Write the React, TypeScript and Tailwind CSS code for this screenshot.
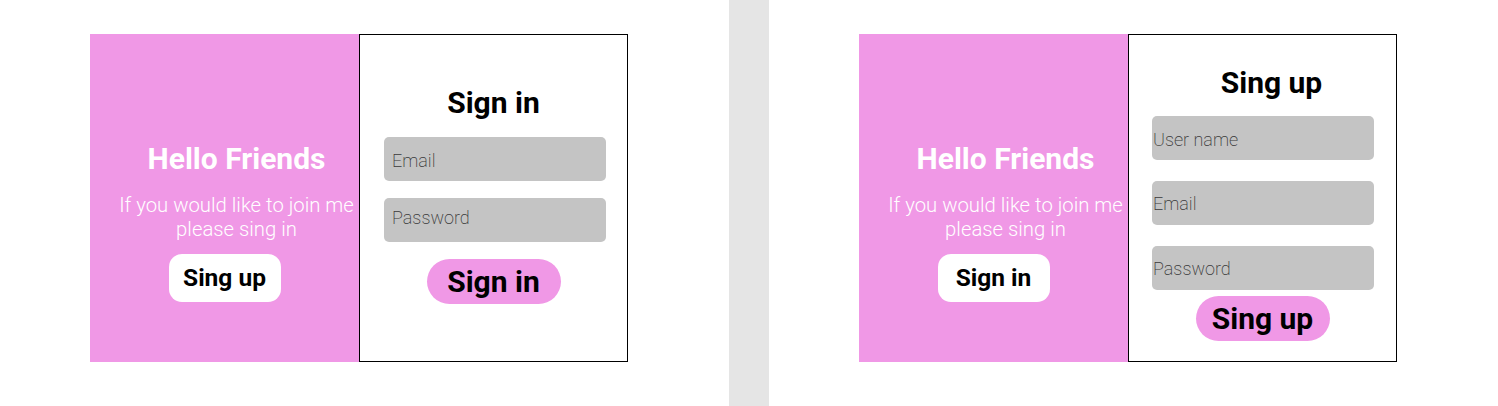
export default function App() {
    return (
        <div className="flex h-[406px] w-[1498px] bg-white font-['Roboto',sans-serif]">
            <div className="w-[729px] pl-[90px] pt-[34px]">
                <div className="flex h-[328px] w-[538px]">
                    <Welcome label="Sing up" />
                    <div className="flex w-[269px] flex-col items-center border border-black pt-[50px]">
                        <h2 className="text-[30px] font-bold leading-[35px] text-black">Sign in</h2>
                        <div className="mt-[17px] flex w-full flex-col gap-[17px] pl-[24px] pr-[21px]">
                            <input
                                placeholder="Email"
                                className="h-[44px] w-full rounded-[5px] bg-[#c4c4c4] px-[8px] pt-[2px] text-[18px] font-extralight text-black outline-none placeholder:text-[#3a3a3a]"
                            />
                            <input
                                placeholder="Password"
                                className="h-[44px] w-full rounded-[5px] bg-[#c4c4c4] px-[8px] pb-[6px] text-[18px] font-extralight text-black outline-none placeholder:text-[#3a3a3a]"
                            />
                        </div>
                        <button className="mt-[17px] h-[45px] w-[134px] rounded-full bg-[#f098e6] text-[30px] font-bold leading-none text-black">
                            Sign in
                        </button>
                    </div>
                </div>
            </div>

            <div className="w-[40px] bg-[#e5e5e5]" />

            <div className="w-[729px] pl-[90px] pt-[34px]">
                <div className="flex h-[328px] w-[538px]">
                    <Welcome label="Sign in" />
                    <div className="flex w-[269px] flex-col items-center border border-black pt-[30px]">
                        <h2 className="pl-[18px] text-[30px] font-bold leading-[35px] text-black">Sing up</h2>
                        <div className="mt-[16px] flex w-full flex-col gap-[21px] pl-[23px] pr-[22px]">
                            <input
                                placeholder="User name"
                                className="h-[44px] w-full rounded-[5px] bg-[#c4c4c4] px-[1px] pt-[3px] text-[18px] font-extralight text-black outline-none placeholder:text-[#3a3a3a]"
                            />
                            <input
                                placeholder="Email"
                                className="h-[44px] w-full rounded-[5px] bg-[#c4c4c4] px-[1px] text-[18px] font-extralight text-black outline-none placeholder:text-[#3a3a3a]"
                            />
                            <input
                                placeholder="Password"
                                className="h-[44px] w-full rounded-[5px] bg-[#c4c4c4] px-[1px] text-[18px] font-extralight text-black outline-none placeholder:text-[#3a3a3a]"
                            />
                        </div>
                        <button className="mt-[6px] h-[45px] w-[134px] rounded-full bg-[#f098e6] text-[30px] font-bold leading-none text-black">
                            Sing up
                        </button>
                    </div>
                </div>
            </div>
        </div>
    )
}

function Welcome({ label }: { label: string }) {
    return (
        <div className="flex w-[269px] flex-col items-center bg-[#f098e6] pt-[107px]">
            <div className="w-full pl-[24px] text-center text-white">
                <h1 className="whitespace-nowrap text-[30px] font-bold leading-[35px]">Hello Friends</h1>
                <p className="mt-[18px] whitespace-nowrap text-[20.3px] font-light leading-[23.5px]">
                    If you would like to join me
                    <br />
                    please sing in
                </p>
            </div>
            <button className="mt-[13px] h-[48px] w-[112px] rounded-[13px] bg-white text-[24.5px] font-bold leading-none text-black">
                {label}
            </button>
        </div>
    )
}
